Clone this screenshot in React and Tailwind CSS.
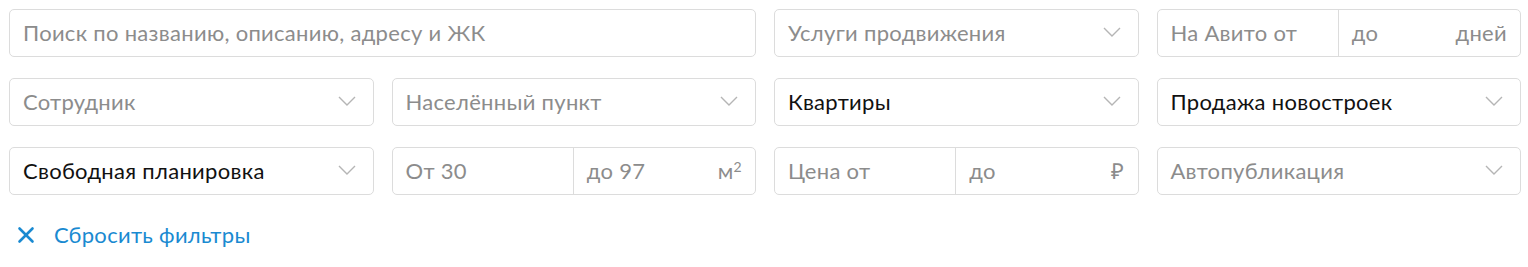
import { X } from "lucide-react"

const Chevron = () => (
  <svg width="18" height="10" viewBox="0 0 18 10" fill="none" className="shrink-0">
    <path d="M1 1l8 8 8-8" stroke="#b5b5b5" strokeWidth="1.4" />
  </svg>
)

const Select = ({ label, value }) => (
  <div className="flex h-12 items-center justify-between rounded-[5px] border border-[#dcdcdc] bg-white pb-[2px] pl-[13px] pr-[17px]">
    <span className={value ? "text-[#111]" : "text-[#8c8c8c]"}>{label}</span>
    <Chevron />
  </div>
)

const Range = ({ from, to, unit }) => (
  <div className="grid h-12 grid-cols-2 rounded-[5px] border border-[#dcdcdc] bg-white">
    <div className="flex items-center border-r border-[#dcdcdc] pb-[2px] pl-[13px] text-[#8c8c8c]">{from}</div>
    <div className="flex items-center justify-between pb-[2px] pl-[13px] pr-[13px] text-[#8c8c8c]">
      <span>{to}</span>
      <span>{unit}</span>
    </div>
  </div>
)

export default function App() {
  return (
    <div className="h-[267px] bg-white pl-[9px] pr-[7px] pt-[9px] font-['Lato','Liberation_Sans',sans-serif] text-[22px] tracking-[0.3px]">
      <div className="grid grid-cols-4 gap-x-[18px] gap-y-[21px]">
        <div className="col-span-2 flex h-12 items-center rounded-[5px] border border-[#dcdcdc] bg-white pb-[2px] pl-[13px] text-[#8c8c8c]">
          Поиск по названию, описанию, адресу и ЖК
        </div>
        <Select label="Услуги продвижения" />
        <Range from="На Авито от" to="до" unit="дней" />

        <Select label="Сотрудник" />
        <Select label="Населённый пункт" />
        <Select label="Квартиры" value />
        <Select label="Продажа новостроек" value />

        <Select label="Свободная планировка" value />
        <Range from="От 30" to="до 97" unit={<span>м<sup className="text-[14px]">2</sup></span>} />
        <Range from="Цена от" to="до" unit="₽" />
        <Select label="Автопубликация" />
      </div>
      <button className="mt-[23px] flex items-center gap-[15px] pl-[4px] text-[#1a8ad1]">
        <X size={26} strokeWidth={2.4} />
        <span>Сбросить фильтры</span>
      </button>
    </div>
  )
}
